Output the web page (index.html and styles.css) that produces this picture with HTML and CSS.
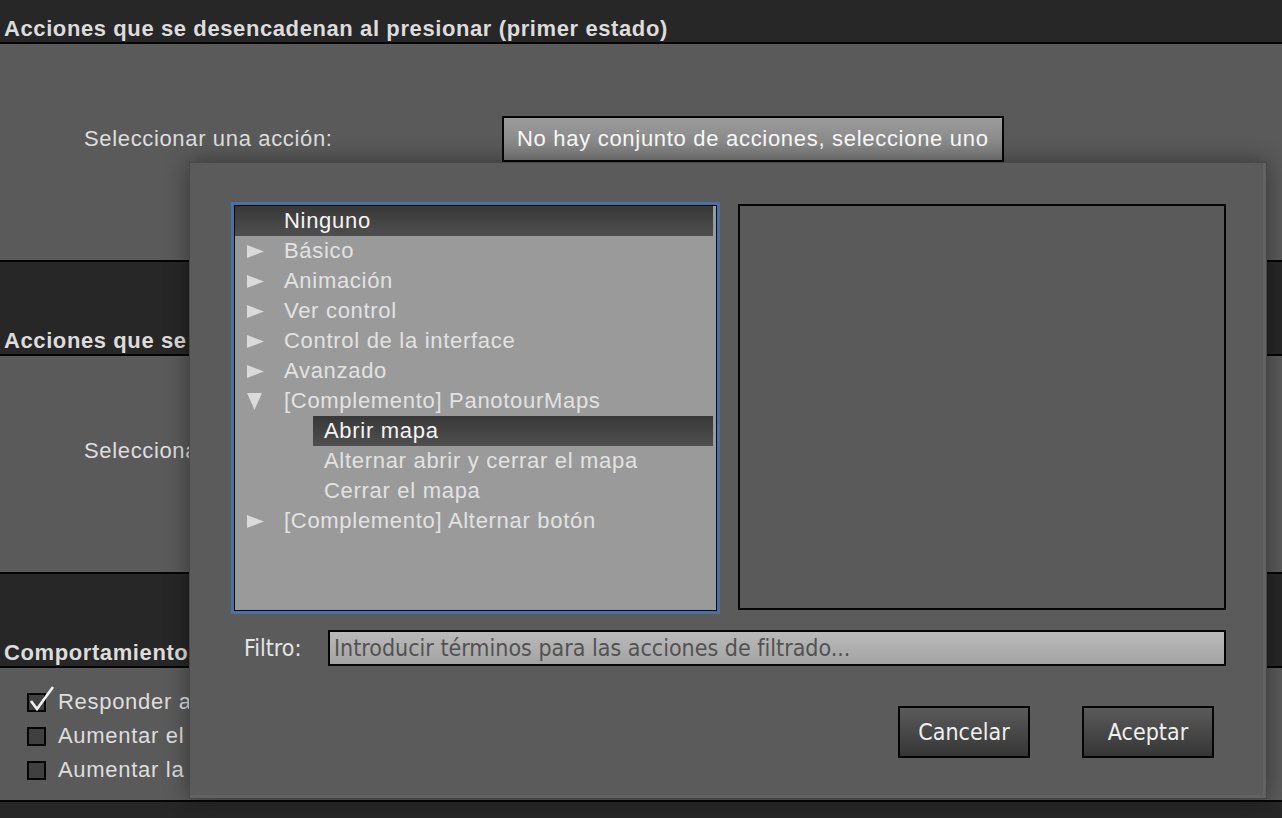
FILE: index.html
```html
<!DOCTYPE html>
<html lang="es">
<head>
  <meta charset="UTF-8">
  <title>Acciones</title>
  <link rel="stylesheet" href="styles.css">
</head>
<body>

  <div class="panel">
    <div class="panel-head first">Acciones que se desencadenan al presionar (primer estado)</div>
    <div class="panel-body">
      <div class="action-row">
        <p class="action-label">Seleccionar una acción:</p>
        <div class="action-select">No hay conjunto de acciones, seleccione uno</div>
      </div>
    </div>
  </div>

  <div class="panel">
    <div class="panel-head">Acciones que se desencadenan al presionar (segundo estado)</div>
    <div class="panel-body">
      <div class="action-row">
        <p class="action-label">Seleccionar una acción:</p>
        <div class="action-select">No hay conjunto de acciones, seleccione uno</div>
      </div>
    </div>
  </div>

  <div class="panel">
    <div class="panel-head">Comportamiento</div>
    <div class="panel-body short">
      <div class="check-row">
        <span class="check-box">
          <svg class="check-mark" width="28" height="28" viewBox="0 0 28 28"><path d="M2 15 L8 23 L24 1" fill="none" stroke="#f2f2f2" stroke-width="2.6" stroke-linejoin="miter"/></svg>
        </span>
        Responder a los clics del ratón
      </div>
      <div class="check-row"><span class="check-box"></span>Aumentar el tamaño al pasar el ratón</div>
      <div class="check-row"><span class="check-box"></span>Aumentar la opacidad al pasar el ratón</div>
    </div>
  </div>
  <div class="page-foot"></div>

  <!-- selector de acciones -->
  <div class="dialog">
    <div class="dialog-top">
      <div class="tree-ring">
        <div class="tree">
          <div class="tree-item selected leaf">Ninguno</div>
          <div class="tree-item"><span class="caret"><svg width="17" height="13" viewBox="0 0 17 13"><polygon points="0,0 17,6.5 0,13" fill="#dadada"/></svg></span>Básico</div>
          <div class="tree-item"><span class="caret"><svg width="17" height="13" viewBox="0 0 17 13"><polygon points="0,0 17,6.5 0,13" fill="#dadada"/></svg></span>Animación</div>
          <div class="tree-item"><span class="caret"><svg width="17" height="13" viewBox="0 0 17 13"><polygon points="0,0 17,6.5 0,13" fill="#dadada"/></svg></span>Ver control</div>
          <div class="tree-item"><span class="caret"><svg width="17" height="13" viewBox="0 0 17 13"><polygon points="0,0 17,6.5 0,13" fill="#dadada"/></svg></span>Control de la interface</div>
          <div class="tree-item"><span class="caret"><svg width="17" height="13" viewBox="0 0 17 13"><polygon points="0,0 17,6.5 0,13" fill="#dadada"/></svg></span>Avanzado</div>
          <div class="tree-item"><span class="caret"><svg width="15" height="17" viewBox="0 0 15 17"><polygon points="0,0 15,0 7.5,17" fill="#dadada"/></svg></span>[Complemento] PanotourMaps</div>
          <div class="tree-item sub selected">Abrir mapa</div>
          <div class="tree-item sub">Alternar abrir y cerrar el mapa</div>
          <div class="tree-item sub">Cerrar el mapa</div>
          <div class="tree-item"><span class="caret"><svg width="17" height="13" viewBox="0 0 17 13"><polygon points="0,0 17,6.5 0,13" fill="#dadada"/></svg></span>[Complemento] Alternar botón</div>
        </div>
      </div>
      <div class="preview"></div>
    </div>

    <div class="filter-row">
      <label class="filter-label" for="filter">Filtro:</label>
      <input class="filter-input" id="filter" type="text" placeholder="Introducir términos para las acciones de filtrado...">
    </div>

    <div class="dialog-buttons">
      <div class="btn">Cancelar</div>
      <div class="btn">Aceptar</div>
    </div>
  </div>

</body>
</html>
```

FILE: styles.css
```css
*{
  margin: 0;
  padding: 0;
  box-sizing: border-box;
}

body{
  font-family: "Liberation Sans", Arial, sans-serif;
  background-color: #272727;
  color: #dedede;
  width: 1282px;
  height: 818px;
  overflow: hidden;
  position: relative;
}

/* paneles del fondo */
.panel-head{
  height: 96px;
  background-color: #272727;
  border-top: 2px solid #050505;
  border-bottom: 2px solid #050505;
  display: flex;
  align-items: flex-end;
  padding: 0 4px 1px;
  font-size: 22px;
  font-weight: bold;
  letter-spacing: 0.6px;
  line-height: 24px;
  color: #dcdcdc;
  white-space: nowrap;
}

.panel-head.first{
  height: 44px;
  border-top: none;
}

.panel-body{
  height: 216px;
  background-color: #5a5a5a;
}

.panel-body.short{
  height: 132px;
  padding-top: 17px;
}

.action-row{
  display: flex;
  align-items: center;
  padding: 72px 0 0 84px;
}

.action-label{
  width: 418px;
  font-size: 22px;
  letter-spacing: 0.65px;
}

.action-select{
  width: 502px;
  height: 46px;
  border: 2px solid #050505;
  background: linear-gradient(#9c9c9c, #7c7c7c);
  color: #fafafa;
  font-size: 22px;
  letter-spacing: 0.7px;
  line-height: 42px;
  padding-left: 13px;
  white-space: nowrap;
}

.check-row{
  height: 34px;
  display: flex;
  align-items: center;
  padding-left: 27px;
  font-size: 22px;
  letter-spacing: 0.7px;
  white-space: nowrap;
}

.check-box{
  width: 19px;
  height: 19px;
  border: 2px solid #050505;
  background-color: #404040;
  margin-right: 12px;
  position: relative;
}

.check-mark{
  position: absolute;
  left: 0;
  top: -9px;
}

.page-foot{
  border-top: 2px solid #050505;
  height: 16px;
}

/* dialogo */
.dialog{
  position: absolute;
  left: 189px;
  top: 162px;
  width: 1078px;
  height: 637px;
  background-color: #5b5b5b;
  border: 1px solid #474747;
  box-shadow: 0 0 22px rgba(0, 0, 0, 0.4), inset -3px -3px 0 #626262;
  padding: 39px 0 0 41px;
}

.dialog-top{
  display: flex;
  column-gap: 18px;
}

.tree-ring{
  width: 489px;
  height: 412px;
  border: 3px solid #4c70a1;
}

.tree{
  height: 100%;
  background-color: #9a9a9a;
  border: 1px solid #0a0a14;
  padding: 0 3px 0 0;
}

.tree-item{
  height: 30px;
  display: flex;
  align-items: center;
  padding-left: 12px;
  font-size: 22px;
  letter-spacing: 0.7px;
  color: #e2e2e2;
  white-space: nowrap;
}

.tree-item.leaf{
  padding-left: 49px;
}

.tree-item.sub{
  margin-left: 78px;
  padding-left: 11px;
}

.tree-item.selected{
  background: linear-gradient(#383838, #4f4f4f);
  color: #f4f4f4;
}

.caret{
  width: 37px;
  display: flex;
  align-items: center;
}

.preview{
  width: 488px;
  height: 406px;
  margin-top: 2px;
  border: 2px solid #050505;
  background-color: #5a5a5a;
}

.filter-row{
  display: flex;
  align-items: center;
  margin-top: 16px;
  padding-left: 13px;
}

.filter-label{
  width: 84px;
  font-family: "Liberation Sans Narrow", "DejaVu Sans", sans-serif;
  font-stretch: condensed;
  font-size: 23px;
  color: #e6e6e6;
}

.filter-input{
  width: 898px;
  height: 36px;
  border: 2px solid #050505;
  background: linear-gradient(#bababa, #a3a3a3);
  padding-left: 4px;
  font-family: "Liberation Sans Narrow", "DejaVu Sans", sans-serif;
  font-stretch: condensed;
  font-size: 23px;
  outline: none;
}

.filter-input::placeholder{
  color: #525252;
}

.dialog-buttons{
  display: flex;
  justify-content: flex-end;
  column-gap: 52px;
  margin-top: 40px;
  padding-right: 52px;
}

.btn{
  width: 132px;
  height: 52px;
  border: 2px solid #050505;
  background: linear-gradient(#5a5a5a, #363636);
  color: #f0f0f0;
  font-family: "Liberation Sans Narrow", "DejaVu Sans", sans-serif;
  font-stretch: condensed;
  font-size: 23px;
  display: grid;
  place-content: center;
}
```
